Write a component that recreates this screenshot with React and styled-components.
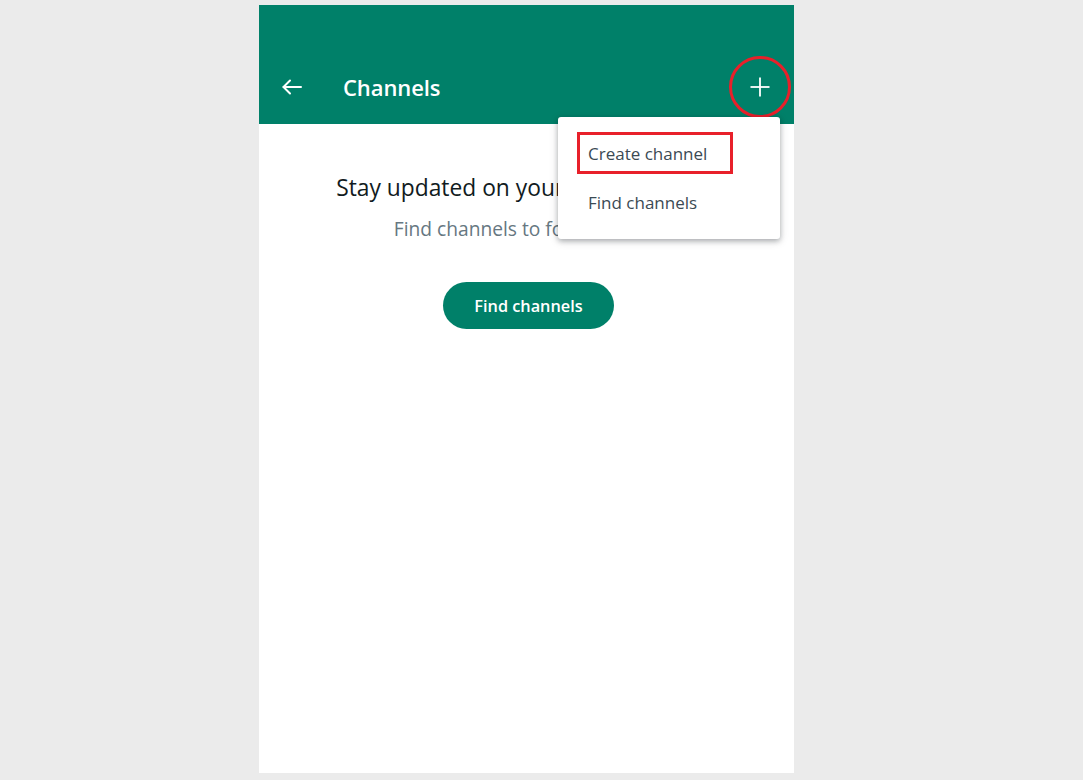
import React from 'react';
import styled, {createGlobalStyle} from 'styled-components';

const GlobalStyle = createGlobalStyle`
    html, body {
        margin: 0;
        padding: 0;
        background: #ebebeb;
        font-family: "Open Sans", "Noto Sans", sans-serif;
    }
`;

const Page = styled.div`
    display: flex;
    align-items: flex-start;
    padding: 5px 0 0 259px;
    height: 780px;
    box-sizing: border-box;
`;

const Panel = styled.div`
    position: relative;
    width: 535px;
    height: 768px;
    background: #ffffff;
    display: flex;
    flex-direction: column;
`;

const Header = styled.header`
    height: 119px;
    background: #008069;
    display: flex;
    align-items: flex-end;
    padding: 0 14px 5px 13px;
    box-sizing: border-box;
`;

const HeaderRow = styled.div`
    flex: 1;
    height: 64px;
    display: flex;
    align-items: center;
`;

const IconButton = styled.button`
    position: relative;
    width: 40px;
    height: 40px;
    border: none;
    background: transparent;
    padding: 0;
    display: flex;
    align-items: center;
    justify-content: center;
    color: #ffffff;
    cursor: pointer;
`;

const Title = styled.h1`
    margin: 0 0 0 31px;
    flex: 1;
    color: #ffffff;
    font-size: 22px;
    font-weight: 600;
    letter-spacing: -0.1px;
`;

const RedRing = styled.span`
    position: absolute;
    left: -11px;
    top: -11px;
    width: 62px;
    height: 62px;
    border: 3px solid #e8202a;
    border-radius: 50%;
    box-sizing: border-box;
    pointer-events: none;
`;

const Body = styled.main`
    display: flex;
    flex-direction: column;
    align-items: center;
    padding: 48px 0 0 4px;
`;

const Heading = styled.div`
    font-size: 22.8px;
    color: #111b21;
    line-height: 31px;
`;

const Sub = styled.div`
    margin-top: 13px;
    font-size: 19.2px;
    color: #667781;
    line-height: 26px;
`;

const PrimaryButton = styled.button`
    margin-top: 40px;
    width: 171px;
    height: 47px;
    border: none;
    border-radius: 24px;
    background: #008069;
    color: #ffffff;
    font-family: inherit;
    font-size: 16.3px;
    font-weight: 600;
    cursor: pointer;
`;

const Menu = styled.ul`
    position: absolute;
    top: 112px;
    right: 14px;
    width: 222px;
    margin: 0;
    padding: 12px 0 12px;
    list-style: none;
    background: #ffffff;
    border-radius: 3px;
    box-shadow: 0 2px 5px rgba(11, 20, 26, 0.26), 0 2px 10px rgba(11, 20, 26, 0.16);
    box-sizing: border-box;
`;

const MenuItem = styled.li`
    position: relative;
    height: 49px;
    display: flex;
    align-items: center;
    padding-left: 30px;
    font-size: 17px;
    color: #3b4a54;
`;

const RedBox = styled.span`
    position: absolute;
    left: 19px;
    top: 3px;
    width: 156px;
    height: 42px;
    border: 3px solid #e8202a;
    box-sizing: border-box;
    pointer-events: none;
`;

const BackIcon = () => (
    <svg width="24" height="24" viewBox="0 0 24 24" fill="none" stroke="currentColor" strokeWidth="2" strokeLinecap="round" strokeLinejoin="round">
        <path d="M21 12H3.5" />
        <path d="M10 5.5L3.5 12L10 18.5" />
    </svg>
);

const PlusIcon = () => (
    <svg width="22" height="22" viewBox="0 0 22 22" fill="none" stroke="currentColor" strokeWidth="1.8">
        <path d="M11 1.5V20.5" />
        <path d="M1.5 11H20.5" />
    </svg>
);

const menuItems = [
    {label: 'Create channel', marked: true},
    {label: 'Find channels'},
];

export default function App() {
    return (
        <Page>
            <GlobalStyle />
            <Panel>
                <Header>
                    <HeaderRow>
                        <IconButton aria-label="Back">
                            <BackIcon />
                        </IconButton>
                        <Title>Channels</Title>
                        <IconButton aria-label="New">
                            <PlusIcon />
                            <RedRing />
                        </IconButton>
                    </HeaderRow>
                </Header>
                <Body>
                    <Heading>Stay updated on your favorite topics</Heading>
                    <Sub>Find channels to follow below.</Sub>
                    <PrimaryButton>Find channels</PrimaryButton>
                </Body>
                <Menu>
                    {menuItems.map(item => (
                        <MenuItem key={item.label}>
                            {item.label}
                            {item.marked && <RedBox />}
                        </MenuItem>
                    ))}
                </Menu>
            </Panel>
        </Page>
    );
}
